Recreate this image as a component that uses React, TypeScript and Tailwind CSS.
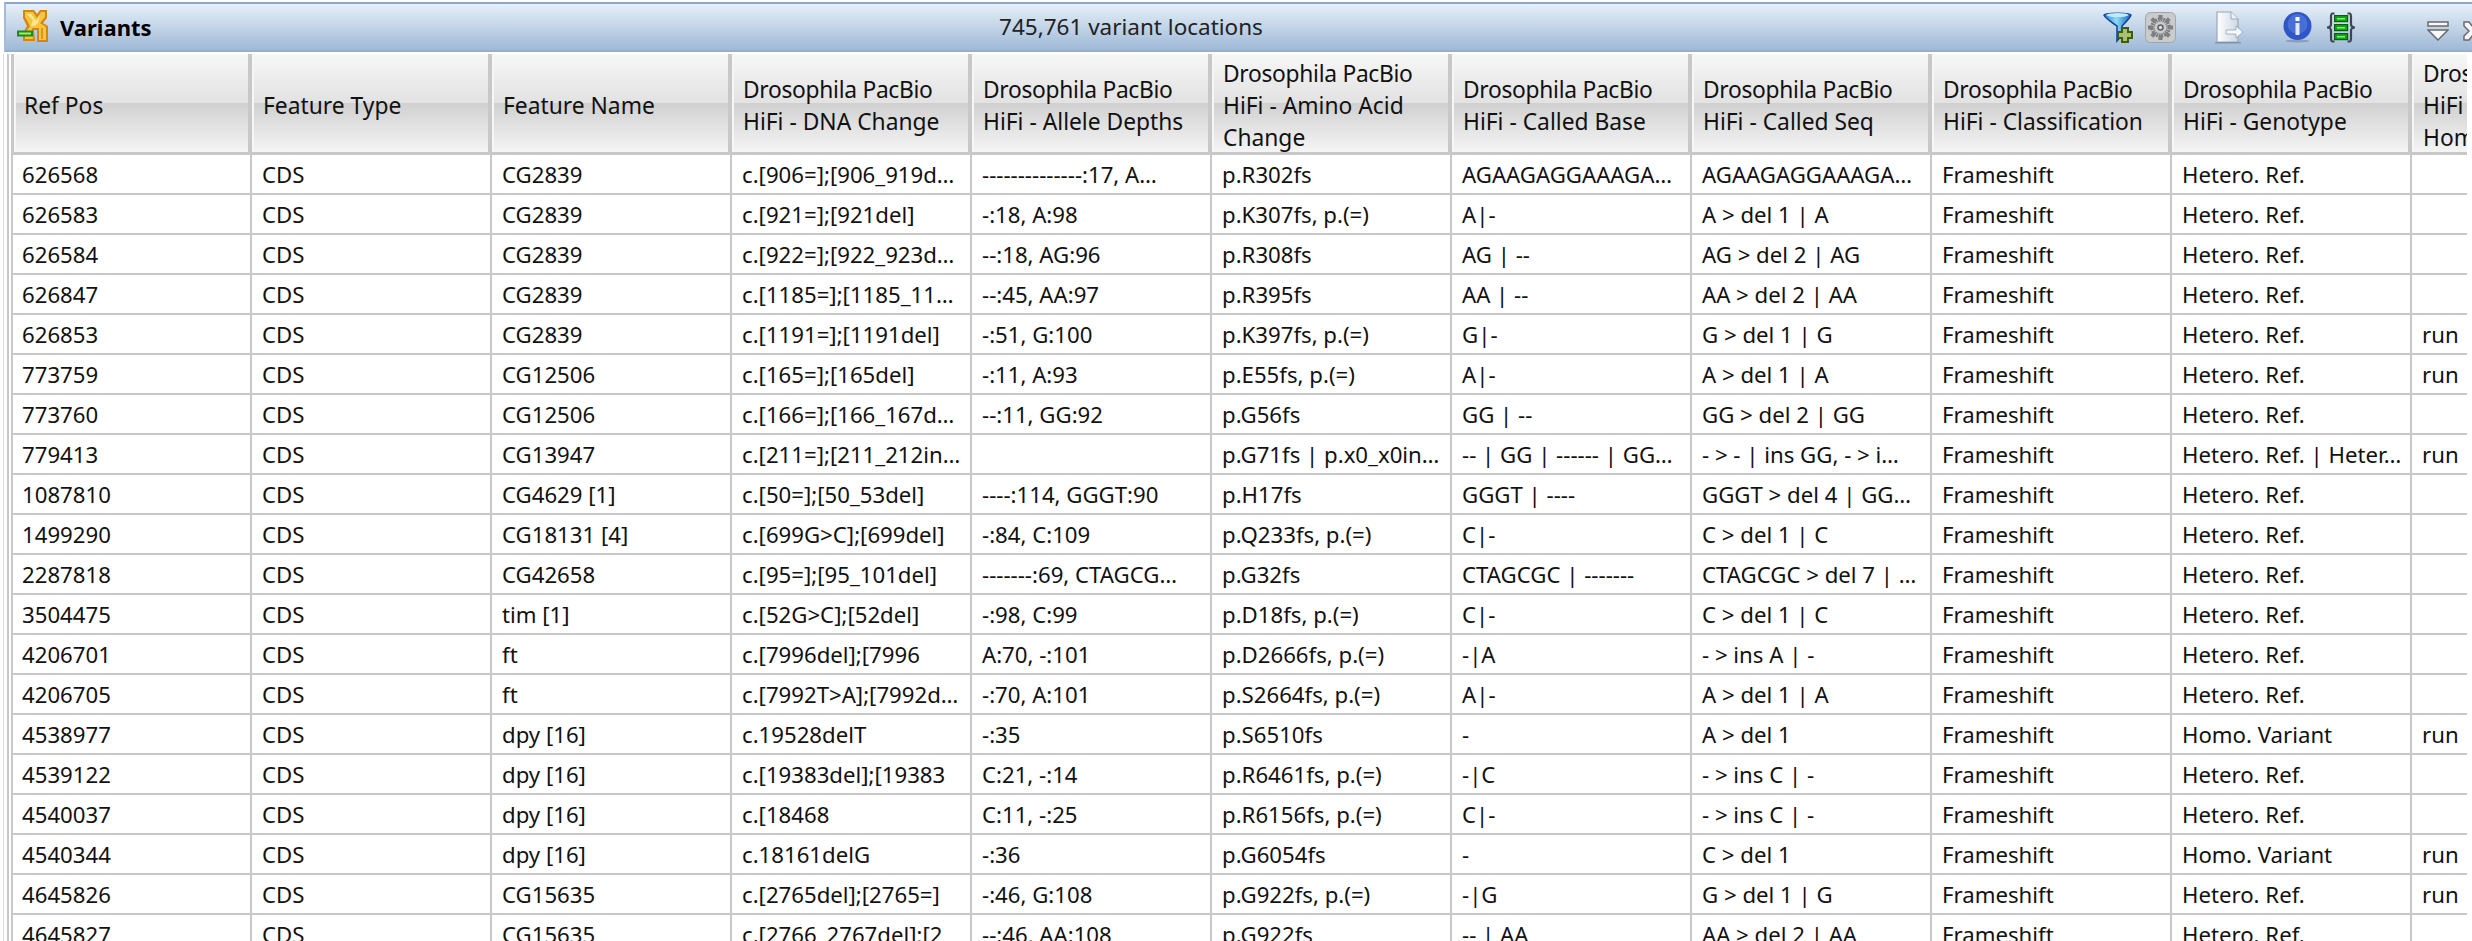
const headers: string[][] = [
  ["Ref Pos"],
  ["Feature Type"],
  ["Feature Name"],
  ["Drosophila PacBio", "HiFi - DNA Change"],
  ["Drosophila PacBio", "HiFi - Allele Depths"],
  ["Drosophila PacBio", "HiFi - Amino Acid", "Change"],
  ["Drosophila PacBio", "HiFi - Called Base"],
  ["Drosophila PacBio", "HiFi - Called Seq"],
  ["Drosophila PacBio", "HiFi - Classification"],
  ["Drosophila PacBio", "HiFi - Genotype"],
  ["Drosophila PacBio", "HiFi - Has", "Homopolymer"],
];

const HR = "Hetero. Ref.";
const HV = "Homo. Variant";
const rows: string[][] = [
  ["626568", "CG2839", "c.[906=];[906_919d…", "--------------:17, A…", "p.R302fs", "AGAAGAGGAAAGA…", "AGAAGAGGAAAGA…", HR, ""],
  ["626583", "CG2839", "c.[921=];[921del]", "-:18, A:98", "p.K307fs, p.(=)", "A|-", "A > del 1 | A", HR, ""],
  ["626584", "CG2839", "c.[922=];[922_923d…", "--:18, AG:96", "p.R308fs", "AG | --", "AG > del 2 | AG", HR, ""],
  ["626847", "CG2839", "c.[1185=];[1185_11…", "--:45, AA:97", "p.R395fs", "AA | --", "AA > del 2 | AA", HR, ""],
  ["626853", "CG2839", "c.[1191=];[1191del]", "-:51, G:100", "p.K397fs, p.(=)", "G|-", "G > del 1 | G", HR, "run"],
  ["773759", "CG12506", "c.[165=];[165del]", "-:11, A:93", "p.E55fs, p.(=)", "A|-", "A > del 1 | A", HR, "run"],
  ["773760", "CG12506", "c.[166=];[166_167d…", "--:11, GG:92", "p.G56fs", "GG | --", "GG > del 2 | GG", HR, ""],
  ["779413", "CG13947", "c.[211=];[211_212in…", "", "p.G71fs | p.x0_x0in…", "-- | GG | ------ | GG…", "- > - | ins GG, - > i…", "Hetero. Ref. | Heter…", "run"],
  ["1087810", "CG4629 [1]", "c.[50=];[50_53del]", "----:114, GGGT:90", "p.H17fs", "GGGT | ----", "GGGT > del 4 | GG…", HR, ""],
  ["1499290", "CG18131 [4]", "c.[699G>C];[699del]", "-:84, C:109", "p.Q233fs, p.(=)", "C|-", "C > del 1 | C", HR, ""],
  ["2287818", "CG42658", "c.[95=];[95_101del]", "-------:69, CTAGCG…", "p.G32fs", "CTAGCGC | -------", "CTAGCGC > del 7 | …", HR, ""],
  ["3504475", "tim [1]", "c.[52G>C];[52del]", "-:98, C:99", "p.D18fs, p.(=)", "C|-", "C > del 1 | C", HR, ""],
  ["4206701", "ft", "c.[7996del];[7996", "A:70, -:101", "p.D2666fs, p.(=)", "-|A", "- > ins A | -", HR, ""],
  ["4206705", "ft", "c.[7992T>A];[7992d…", "-:70, A:101", "p.S2664fs, p.(=)", "A|-", "A > del 1 | A", HR, ""],
  ["4538977", "dpy [16]", "c.19528delT", "-:35", "p.S6510fs", "-", "A > del 1", HV, "run"],
  ["4539122", "dpy [16]", "c.[19383del];[19383", "C:21, -:14", "p.R6461fs, p.(=)", "-|C", "- > ins C | -", HR, ""],
  ["4540037", "dpy [16]", "c.[18468", "C:11, -:25", "p.R6156fs, p.(=)", "C|-", "- > ins C | -", HR, ""],
  ["4540344", "dpy [16]", "c.18161delG", "-:36", "p.G6054fs", "-", "C > del 1", HV, "run"],
  ["4645826", "CG15635", "c.[2765del];[2765=]", "-:46, G:108", "p.G922fs, p.(=)", "-|G", "G > del 1 | G", HR, "run"],
  ["4645827", "CG15635", "c.[2766_2767del];[2", "--:46, AA:108", "p.G922fs", "-- | AA", "AA > del 2 | AA", HR, ""],
];

function LogoIcon() {
  return (
    <svg width="34" height="34" viewBox="0 0 34 34" className="shrink-0">
      <path d="M7 0H18L21 4 24 0H31V8L27 13 32 16V32H21V20H18L19 31H7V23L11 16 7 8Z" fill="#d98410" />
      <path d="M9 2H17L21 8 25 2H29V7L24 13 30 17V30H23V18H16L17 29H9V23L14 16 9 7Z" fill="#f4c53e" />
      <path d="M11 4H15L20 11 24 5 22 13 18 16H15L17 10Z" fill="#fbe79a" />
      <path d="M26 18V29" stroke="#d98410" strokeWidth="1.500" />
      <rect x="1" y="20.500" width="16" height="6" fill="#1d8a1d" />
      <rect x="3" y="22.500" width="12" height="2" fill="#9ef06a" />
    </svg>
  );
}

function FunnelIcon() {
  return (
    <svg width="31" height="32" viewBox="0 0 31 32">
      <defs>
        <linearGradient id="fun" x1="0" x2="1" y1="0" y2="0">
          <stop offset="0" stopColor="#1f7fd0" />
          <stop offset="0.45" stopColor="#8fdcf8" />
          <stop offset="1" stopColor="#1566b8" />
        </linearGradient>
      </defs>
      <path d="M1 4c0-2.500 27-2.500 27 0 0 2-9 11-9 11v9l-5 6V15S1 6 1 4z" fill="url(#fun)" stroke="#0d3f9a" strokeWidth="1.500" />
      <ellipse cx="14.500" cy="4" rx="11" ry="2" fill="#bfeafa" />
      <path d="M19 18h6v4h4v6h-4v4h-6v-4h-4v-6h4z" fill="#a8c070" stroke="#3d5c10" strokeWidth="2" transform="translate(0 -1)" />
    </svg>
  );
}

function GearIcon() {
  return (
    <svg width="31" height="31" viewBox="0 0 31 31">
      <rect x="0.500" y="0.500" width="30" height="30" rx="5" fill="#c9cbcd" stroke="#a2a4a6" />
      <g stroke="#77797b" strokeWidth="4.500" strokeDasharray="1.500 1" fill="none">
        <circle cx="15.500" cy="15.500" r="8" />
      </g>
      <path d="M15.500 3v5M15.500 23v5M3 15.500h5M23 15.500h5M6.700 6.700l3.500 3.500M20.800 20.800l3.500 3.500M24.300 6.700l-3.500 3.500M10.200 20.800l-3.500 3.500" stroke="#7d7f81" strokeWidth="4" />
      <circle cx="15.500" cy="15.500" r="2.500" fill="#dadcde" stroke="#5f6163" strokeWidth="1.500" />
    </svg>
  );
}

function DocIcon() {
  return (
    <svg width="30" height="33" viewBox="0 0 30 33">
      <defs>
        <linearGradient id="doc" x1="0" x2="1" y1="0" y2="0">
          <stop offset="0" stopColor="#ffffff" />
          <stop offset="1" stopColor="#cfd8e4" />
        </linearGradient>
      </defs>
      <path d="M3 1h14l7 7v23H3z" fill="url(#doc)" stroke="#9aa9ba" strokeWidth="1.200" />
      <path d="M17 1v7h7" fill="#eef2f6" stroke="#9aa9ba" />
      <path d="M12 19h10v-4l7 6-7 6v-4H12z" fill="#f6f8fa" stroke="#93a2b3" strokeWidth="0.800" />
      <rect x="1" y="31" width="26" height="1.500" fill="#6f8299" opacity="0.700" />
    </svg>
  );
}

function InfoIcon() {
  return (
    <svg width="29" height="31" viewBox="0 0 29 31">
      <ellipse cx="14.500" cy="29" rx="12" ry="1.500" fill="#6f86a6" opacity="0.600" />
      <circle cx="14.500" cy="14" r="14" fill="#2f55c8" />
      <circle cx="14.500" cy="12" r="10" fill="#5a80e0" opacity="0.600" />
      <rect x="12.500" y="5" width="4" height="4" fill="#fff" />
      <rect x="12.500" y="11" width="4" height="12" fill="#e2e8f4" />
    </svg>
  );
}

function BracketsIcon() {
  return (
    <svg width="32" height="31" viewBox="0 0 32 31">
      <path d="M9.500 1.500H7.500C6 1.500 6 3 6 5v7c0 2-1 3.500-4 3.500 3 0 4 1.500 4 3.500v7c0 2 0 3.500 1.500 3.500h2" fill="none" stroke="#3e4650" strokeWidth="2.200" />
      <path d="M22.500 1.500h2C26 1.500 26 3 26 5v7c0 2 1 3.500 4 3.500-3 0-4 1.500-4 3.500v7c0 2 0 3.500-1.500 3.500h-2" fill="none" stroke="#3e4650" strokeWidth="2.200" />
      <g fill="#12a512" stroke="#0b5c12" strokeWidth="1.200">
        <rect x="9.600" y="3.600" width="13" height="6" />
        <rect x="9.600" y="12.600" width="13" height="6" />
        <rect x="9.600" y="21.600" width="13" height="6" />
      </g>
      <g fill="#7cf07c">
        <rect x="12" y="6" width="8" height="1.500" />
        <rect x="12" y="15" width="8" height="1.500" />
        <rect x="12" y="24" width="8" height="1.500" />
      </g>
    </svg>
  );
}

function CollapseIcon() {
  return (
    <svg width="22" height="20" viewBox="0 0 22 20">
      <rect x="1" y="1" width="20" height="4" fill="#f6f8fb" stroke="#6a6a6a" strokeWidth="1.500" />
      <path d="M1 9h20L11 19z" fill="#f6f8fb" stroke="#6a6a6a" strokeWidth="1.500" strokeLinejoin="miter" />
    </svg>
  );
}

function CloseIcon() {
  return (
    <svg width="20" height="20" viewBox="0 0 20 20">
      <path d="M1 1h5l4 5 4-5h5v4l-5 5 5 5v4h-5l-4-5-4 5H1v-4l5-5-5-5z" fill="#f6f8fb" stroke="#6a6a6a" strokeWidth="1.500" />
    </svg>
  );
}

export default function App() {
  return (
    <div className="w-[2472px] h-[941px] overflow-hidden bg-white text-[#111] font-['Noto_Sans',sans-serif] flex flex-col pt-[2px]">
      <div className="h-[50px] shrink-0 ml-[4px] border-t-2 border-l-2 border-b-2 border-t-[#8ea8cc] border-l-[#a5bcd9] border-b-[#94afd2] bg-[linear-gradient(to_bottom,#e6f0f8,#9fb9d7)] flex items-center overflow-hidden">
        <div className="w-[166px] shrink-0 flex items-center pl-[10px] gap-[10px]">
          <LogoIcon />
          <span className="text-[22px] font-bold text-black">Variants</span>
        </div>
        <div className="w-[1918px] shrink-0 text-center text-[22.5px] text-[#222]">745,761 variant locations</div>
        <div className="flex-1 flex items-center overflow-hidden pl-[13px]">
          <div className="shrink-0"><FunnelIcon /></div>
          <div className="shrink-0 ml-[11px]"><GearIcon /></div>
          <div className="shrink-0 ml-[38px]"><DocIcon /></div>
          <div className="shrink-0 ml-[39px]"><InfoIcon /></div>
          <div className="shrink-0 ml-[13px]"><BracketsIcon /></div>
          <div className="shrink-0 ml-[70px] mt-[8px]"><CollapseIcon /></div>
          <div className="shrink-0 ml-[14px] mt-[8px]"><CloseIcon /></div>
        </div>
      </div>
      <div className="flex-1 ml-[3px] mt-[2px] border-l border-[#dcdcdc] pl-[3px] min-h-0">
        <div className="h-full border-l-2 border-[#c8c8c8] pl-[2px]">
          <div className="w-[2456px] h-full overflow-hidden">
            <div className="grid grid-cols-[241px_repeat(9,240px)_55px] h-[101px]">
              {headers.map((lines, i) => (
                <div
                  key={i}
                  className={`h-[101px] overflow-hidden flex flex-col justify-center pt-[5px] border-b-[3px] border-[#c8c8c8] bg-[linear-gradient(to_bottom,#f7f7f7,#e2e2e2_50%,#d0d0d0_50%,#f5f5f5)] shadow-[inset_2px_0_0_#f6f6f6] text-[22.8px] leading-[32px] whitespace-nowrap ${i === 0 ? "border-l-[3px] pl-[10px]" : "pl-[11px]"} ${i === 10 ? "" : "border-r-4"}`}
                >
                  {lines.map((l) => (
                    <div key={l} className={l.startsWith("Dros") ? "tracking-[-0.3px]" : ""}>{l}</div>
                  ))}
                </div>
              ))}
            </div>
            {rows.map((r) => (
              <div
                key={r[0]}
                className="grid grid-cols-[241px_repeat(9,240px)_55px] h-[40px] text-[22.2px] leading-[38px] whitespace-nowrap"
              >
                <Cell first>{r[0]}</Cell>
                <Cell>CDS</Cell>
                <Cell>{r[1]}</Cell>
                <Cell>{r[2]}</Cell>
                <Cell>{r[3]}</Cell>
                <Cell>{r[4]}</Cell>
                <Cell>{r[5]}</Cell>
                <Cell>{r[6]}</Cell>
                <Cell>Frameshift</Cell>
                <Cell>{r[7]}</Cell>
                <div className="h-[40px] overflow-hidden pt-[1px] pl-[10px] border-b-2 border-[#c8c8c8]">{r[8]}</div>
              </div>
            ))}
          </div>
        </div>
      </div>
    </div>
  );
}

function Cell({ children, first }: { children: React.ReactNode; first?: boolean }) {
  return (
    <div
      className={`h-[40px] overflow-hidden pt-[1px] border-b-2 border-r-2 border-[#c8c8c8] ${first ? "border-l-2 pl-[9px]" : "pl-[10px]"}`}
    >
      {children}
    </div>
  );
}
